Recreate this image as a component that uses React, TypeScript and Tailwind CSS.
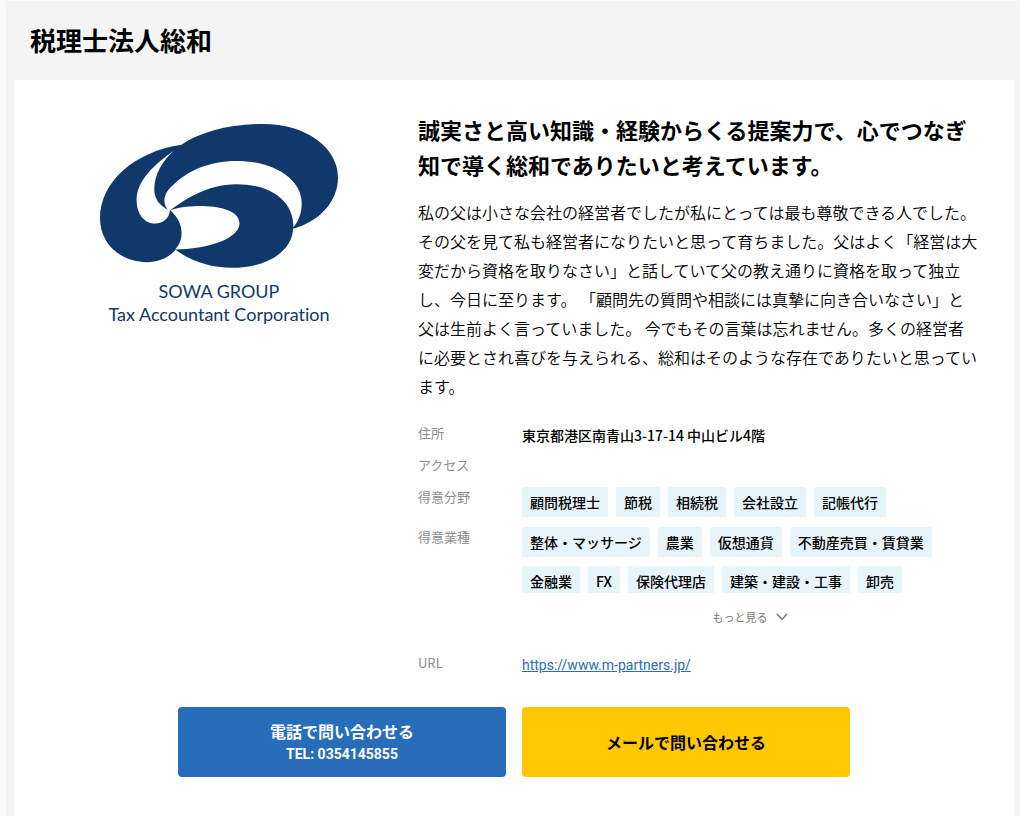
import type { ReactNode } from "react";

const fields = ["顧問税理士", "節税", "相続税", "会社設立", "記帳代行"];

const industries = [
  "整体・マッサージ",
  "農業",
  "仮想通貨",
  "不動産売買・賃貸業",
  "金融業",
  "FX",
  "保険代理店",
  "建築・建設・工事",
  "卸売",
];

function Tag({ children }: { children: ReactNode }) {
  return (
    <li className="flex h-[30px] items-center rounded-xs bg-[#e7f5fa] px-2 text-sm font-medium">
      {children}
    </li>
  );
}

function Row({ label, children }: { label: string; children?: ReactNode }) {
  return (
    <div className="flex min-h-[26px]">
      <dt className="w-[104px] shrink-0 text-[13px] leading-6 text-[#8c8c8c]">{label}</dt>
      <dd className="min-w-0 flex-1 pt-0.5">{children}</dd>
    </div>
  );
}

function Logo() {
  return (
    <figure className="flex flex-col items-center text-[#10386b]">
      <svg viewBox="30 42 715 432" className="w-[238px]" role="img" aria-label="SOWA GROUP">
        <path
          fill="currentColor"
          d="M275 104C135 124 30 215 30 325C30 405 95 457 172 457C210 457 240 440 257 420C300 452 360 474 428 474C530 474 608 425 610 357C690 335 745 275 745 203C745 112 648 42 520 42C420 42 332 66 275 104Z"
        />
        <path
          fill="#fff"
          d="M252 122C195 162 140 210 140 270C140 315 165 341 196 341C220 341 238 325 240 302C212 290 193 270 193 238C193 192 220 150 252 122Z"
        />
        <path
          fill="#fff"
          d="M234 300C216 280 222 250 245 230C290 182 360 153 440 153C550 153 636 206 636 280C636 310 626 335 611 352C612 275 545 223 440 223C350 223 280 272 240 302Z"
        />
        <path
          fill="#fff"
          d="M241 301C280 289 320 288 350 289C410 292 449 310 449 340C449 388 350 418 256 419C287 385 280 335 241 301Z"
        />
      </svg>
      <figcaption className="mt-3 text-center font-['Lato','Noto_Sans',sans-serif] text-lg leading-[23px] [font-variant-ligatures:none]">
        SOWA GROUP
        <br />
        Tax Accountant Corporation
      </figcaption>
    </figure>
  );
}

export default function App() {
  return (
    <div className="min-h-screen bg-[#fafafa] pt-px pl-1.5 font-['Noto_Sans_CJK_JP',sans-serif] text-black">
      <div className="flex min-h-[calc(100vh-1px)] flex-col bg-[#f4f4f4] pr-1.5 pl-2">
        <header className="flex h-[79px] items-center px-4 pb-0.5">
          <h1 className="text-[26px] leading-10 font-bold">税理士法人総和</h1>
        </header>

        <main className="flex-1 bg-white px-9 pt-8 pb-10">
          <div className="flex">
            <div className="flex w-[368px] shrink-0 justify-center pt-3 pr-[30px]">
              <Logo />
            </div>

            <section className="min-w-0 flex-1">
              <h2 className="text-[22px] leading-[35px] font-bold">
                誠実さと高い知識・経験からくる提案力で、心でつなぎ知で導く総和でありたいと考えています。
              </h2>
              <p className="mt-4 text-base leading-[29px] font-[350]">
                私の父は小さな会社の経営者でしたが私にとっては最も尊敬できる人でした。その父を見て私も経営者になりたいと思って育ちました。父はよく「経営は大変だから資格を取りなさい」と話していて父の教え通りに資格を取って独立し、今日に至ります。
                「顧問先の質問や相談には真摯に向き合いなさい」と父は生前よく言っていました。
                今でもその言葉は忘れません。多くの経営者に必要とされ喜びを与えられる、総和はそのような存在でありたいと思っています。
              </p>

              <dl className="mt-5 flex flex-col gap-1.5">
                <Row label="住所">
                  <span className="block text-sm leading-6 font-medium">
                    東京都港区南青山3-17-14 中山ビル4階
                  </span>
                </Row>
                <Row label="アクセス" />
                <Row label="得意分野">
                  <ul className="flex flex-wrap gap-2 pb-0.5">
                    {fields.map((name) => (
                      <Tag key={name}>{name}</Tag>
                    ))}
                  </ul>
                </Row>
                <Row label="得意業種">
                  <ul className="flex h-[66px] flex-wrap content-start gap-x-2 gap-y-[9px] overflow-hidden">
                    {industries.map((name) => (
                      <Tag key={name}>{name}</Tag>
                    ))}
                  </ul>
                  <button
                    type="button"
                    className="mt-3 flex h-6 w-full items-center justify-center gap-2 text-[11px] text-[#777]"
                  >
                    もっと見る
                    <svg viewBox="0 0 12 8" className="w-3" fill="none" aria-hidden="true">
                      <path d="M1 1L6 6.5L11 1" stroke="currentColor" strokeWidth="1.5" />
                    </svg>
                  </button>
                </Row>
                <div className="pt-4">
                  <Row label="URL">
                    <a
                      href="https://www.m-partners.jp/"
                      className="block font-['Roboto',sans-serif] text-sm leading-6 text-[#286dba] underline"
                    >
                      https://www.m-partners.jp/
                    </a>
                  </Row>
                </div>
              </dl>
            </section>
          </div>

          <div className="mt-[30px] flex justify-center gap-4">
            <button
              type="button"
              className="flex h-[70px] w-[328px] flex-col items-center justify-center rounded bg-[#286dba] font-bold text-white"
            >
              <span className="text-base leading-6">電話で問い合わせる</span>
              <span className="font-['Roboto',sans-serif] text-sm leading-[22px]">
                TEL: 0354145855
              </span>
            </button>
            <button
              type="button"
              className="h-[70px] w-[328px] rounded bg-[#ffc803] text-base font-bold"
            >
              メールで問い合わせる
            </button>
          </div>
        </main>
      </div>
    </div>
  );
}
